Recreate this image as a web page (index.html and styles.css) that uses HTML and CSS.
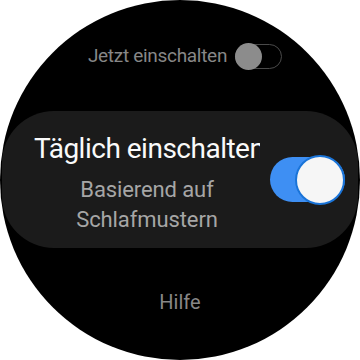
FILE: index.html
```html
<!DOCTYPE html>
<html lang="de">
<head>
<meta charset="utf-8">
<link rel="stylesheet" href="styles.css">
</head>
<body>
<div class="watch">
  <div class="now-row">
    <span class="now-label">Jetzt einschalten</span>
    <span class="toggle-off"><span class="knob-off"></span></span>
  </div>
  <div class="card">
    <div class="card-text">
      <div class="title">Täglich einschalten</div>
      <div class="subtitle">Basierend auf<br>Schlafmustern</div>
    </div>
    <span class="toggle-on"><span class="knob-on"></span></span>
  </div>
  <div class="help">Hilfe</div>
</div>
</body>
</html>
```
FILE: styles.css
```css
html, body {
  margin: 0;
  padding: 0;
  background: #ffffff;
}
.watch {
  width: 360px;
  height: 360px;
  border-radius: 50%;
  background: #000;
  overflow: hidden;
  display: flex;
  flex-direction: column;
  align-items: center;
  font-family: Roboto, "Liberation Sans", sans-serif;
}
.now-row {
  margin-top: 41px;
  margin-left: 10px;
  height: 30px;
  display: flex;
  align-items: center;
  gap: 8px;
}
.now-label {
  font-size: 19px;
  letter-spacing: -0.3px;
  color: #878787;
  line-height: 30px;
}
.toggle-off {
  width: 47px;
  height: 25px;
  box-sizing: border-box;
  border: 1.5px solid #4a4a4a;
  border-radius: 13px;
  display: flex;
  align-items: center;
}
.knob-off {
  width: 27px;
  height: 27px;
  border-radius: 50%;
  background: #8c8c8c;
  margin-left: -1.5px;
  flex: none;
}
.card {
  margin-top: 40px;
  width: 356px;
  height: 137px;
  border-radius: 52px;
  background: #1b1b1b;
  display: flex;
  align-items: center;
  box-sizing: border-box;
  padding-left: 32px;
  flex: none;
}
.card-text {
  width: 226px;
  overflow: hidden;
  text-align: center;
  padding-top: 7px;
}
.title {
  font-size: 28px;
  line-height: 34px;
  letter-spacing: -0.5px;
  color: #fafafa;
  white-space: nowrap;
  text-align: left;
}
.subtitle {
  margin-top: 9px;
  font-size: 22px;
  line-height: 30px;
  letter-spacing: -0.1px;
  color: #a6a6a6;
}
.toggle-on {
  margin-left: 10px;
  width: 75px;
  height: 45px;
  border-radius: 23px;
  background: #3e8ff3;
  display: flex;
  align-items: center;
  justify-content: flex-end;
  flex: none;
}
.knob-on {
  width: 50px;
  height: 50px;
  box-sizing: border-box;
  border-radius: 50%;
  background: #f6f6f6;
  border: 2px solid #1a74d8;
  flex: none;
}
.help {
  margin-top: 39px;
  font-size: 20px;
  line-height: 30px;
  color: #878787;
}
```
